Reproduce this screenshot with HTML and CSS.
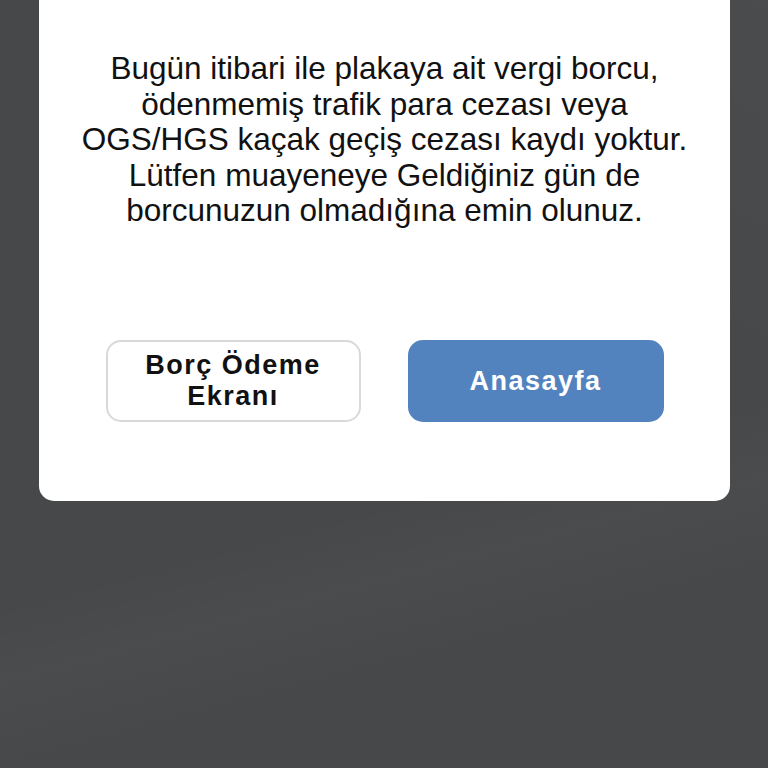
FILE: index.html
```html
<!DOCTYPE html>
<html lang="tr">
<head>
<meta charset="utf-8">
<title>Borç Sorgulama</title>
<link rel="stylesheet" href="styles.css">
</head>
<body>
<div class="screen">
  <div class="card">
    <div class="title">Araç Borç Sorgulama Sonucu</div>
    <p class="message">Bugün itibari ile plakaya ait vergi borcu,<br>ödenmemiş trafik para cezası veya<br>OGS/HGS kaçak geçiş cezası kaydı yoktur.<br>Lütfen muayeneye Geldiğiniz gün de<br>borcunuzun olmadığına emin olunuz.</p>
    <div class="actions">
      <button class="btn btn-outline">Borç Ödeme<br>Ekranı</button>
      <button class="btn btn-primary">Anasayfa</button>
    </div>
  </div>
</div>
</body>
</html>
```
FILE: styles.css
```css
html, body {
  margin: 0;
  padding: 0;
}
body {
  width: 768px;
  height: 768px;
  overflow: hidden;
  background-color: #47484a;
  background-image:
    linear-gradient(165deg, rgba(255,255,255,0) 0%, rgba(255,255,255,0) 62%, rgba(255,255,255,0.018) 70%, rgba(255,255,255,0) 80%),
    linear-gradient(205deg, rgba(255,255,255,0.02) 0%, rgba(255,255,255,0) 35%);
  font-family: "Liberation Sans", Arial, sans-serif;
}
.screen {
  display: flex;
  flex-direction: column;
  padding: 0 38px 0 39px;
}
.card {
  margin-top: -34px;
  background: #ffffff;
  border-radius: 0 0 15px 15px;
  padding-bottom: 79px;
  display: flex;
  flex-direction: column;
  align-items: center;
}
.title {
  height: 36px;
  line-height: 36px;
  font-size: 30px;
  font-weight: bold;
  color: #d3183f;
  text-align: center;
  white-space: nowrap;
}
.message {
  margin: 49px 0 0;
  font-size: 31.5px;
  line-height: 35.5px;
  color: #111111;
  text-align: center;
  white-space: nowrap;
}
.actions {
  margin-top: 111.5px;
  display: flex;
  justify-content: center;
  gap: 47px;
}
.btn {
  width: 256px;
  height: 82px;
  border-radius: 15px;
  font-family: "Liberation Sans", Arial, sans-serif;
  font-size: 27px;
  font-weight: bold;
  letter-spacing: 1.5px;
  line-height: 31px;
  padding: 0;
  display: flex;
  align-items: center;
  justify-content: center;
  text-align: center;
}
.btn-outline {
  width: 255px;
  background: #ffffff;
  color: #111111;
  border: 2px solid #d9d9d9;
}
.btn-primary {
  background: #5383bf;
  color: #ffffff;
  border: none;
}
```
